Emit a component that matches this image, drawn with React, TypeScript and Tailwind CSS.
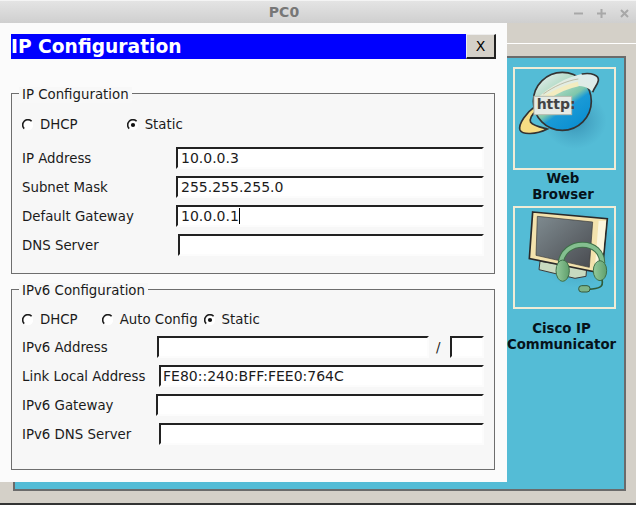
const inputClass =
  "h-[22px] bg-white border-2 border-t-[#222] border-l-[#222] border-r-[#fcfcfc] border-b-[#fcfcfc] text-[14px] leading-[18px] whitespace-nowrap";

function Radio({ checked }: { checked?: boolean }) {
  return (
    <svg width="12" height="12" viewBox="0 0 12 12" className="shrink-0">
      <circle cx="6" cy="6" r="5.2" fill="#fff" />
      <path d="M9.6 2.2 A5 5 0 0 0 2.2 9.6" fill="none" stroke="#1c1c1c" strokeWidth="1.6" />
      {checked && <circle cx="6" cy="6" r="2.1" fill="#111" />}
    </svg>
  );
}

function Row({ label, value, left, caret, tight }: { label: string; value?: string; left: number; caret?: boolean; tight?: boolean }) {
  return (
    <div className="flex h-[29px] items-start">
      <div className="pt-[2px] pl-[10px] text-[13.33px] leading-[20px]" style={{ width: left }}>
        {label}
      </div>
      <div className={`${inputClass} flex-1 ${tight ? "pl-[2px]" : "pl-[3px]"}`}>
        {value}
        {caret && <span className="inline-block h-[16px] w-px bg-black align-[-3px]" />}
      </div>
    </div>
  );
}

function Group({ title, className, children }: { title: string; className: string; children: React.ReactNode }) {
  return (
    <div className={`relative mx-[11px] w-[484px] border border-[#6e6e6e] ${className}`}>
      <div className="absolute left-[7px] top-[-7px] bg-[#f8f8f8] px-[3px] text-[13.33px] leading-[16px]">{title}</div>
      {children}
    </div>
  );
}

// coordinates follow a 3x crop of the tile
function BrowserIcon() {
  return (
    <svg width="99" height="99" viewBox="15 15 297 297">
      <defs>
        <linearGradient id="globe" x1="0.15" y1="0" x2="0.85" y2="1">
          <stop offset="0" stopColor="#e6eeee" />
          <stop offset="0.28" stopColor="#b5dcc8" />
          <stop offset="0.52" stopColor="#7fc7ab" />
          <stop offset="0.62" stopColor="#1a9ad6" />
          <stop offset="1" stopColor="#078cd0" />
        </linearGradient>
        <radialGradient id="iconGlow">
          <stop offset="0" stopColor="#1f6f98" stopOpacity="0.55" />
          <stop offset="1" stopColor="#2f7fa8" stopOpacity="0" />
        </radialGradient>
        <linearGradient id="swoosh" x1="0" y1="1" x2="1" y2="0">
          <stop offset="0" stopColor="#e9ecd2" />
          <stop offset="1" stopColor="#dcecef" />
        </linearGradient>
      </defs>
      <ellipse cx="195" cy="170" rx="95" ry="85" fill="url(#iconGlow)" />
      <path d="M78 125 C50 145 24 180 30 198 C36 213 78 212 112 195 C92 190 70 186 62 175 C58 165 65 150 80 142 Z" fill="#f6dd83" stroke="#333" strokeWidth="5" />
      <circle cx="157" cy="112" r="87" fill="url(#globe)" stroke="#333" strokeWidth="5" />
      <path d="M85 100 C115 72 170 38 215 30 C245 25 268 34 265 50 C262 65 252 70 248 85 C235 65 200 62 170 70 C130 85 100 110 85 118 Z" fill="url(#swoosh)" />
      <path d="M100 90 C130 68 170 50 205 45" fill="none" stroke="#a9a38a" strokeWidth="2" />
      <path d="M215 30 C245 25 268 34 265 50 C262 65 252 70 248 85" fill="none" stroke="#333" strokeWidth="5" />
      <path d="M110 100 C140 82 170 66 205 60" fill="none" stroke="#f3ecc0" strokeWidth="14" />
      <rect x="72" y="97" width="113" height="55" fill="#e6ebe5" stroke="#b5baae" strokeWidth="3" />
      <text x="80" y="136" fontSize="42" fill="#444" fontFamily="'DejaVu Sans', sans-serif">http:</text>
    </svg>
  );
}

function PhoneIcon() {
  return (
    <svg width="99" height="99" viewBox="-15 0 297 297">
      <defs>
        <linearGradient id="screen" x1="0" y1="0" x2="1" y2="1">
          <stop offset="0" stopColor="#7f8b90" />
          <stop offset="1" stopColor="#494b50" />
        </linearGradient>
        <linearGradient id="cup" x1="0" y1="0" x2="1" y2="0">
          <stop offset="0" stopColor="#95cb9c" />
          <stop offset="1" stopColor="#5f9f6c" />
        </linearGradient>
        <radialGradient id="phoneGlow">
          <stop offset="0" stopColor="#1f6f98" stopOpacity="0.6" />
          <stop offset="1" stopColor="#2f7fa8" stopOpacity="0" />
        </radialGradient>
      </defs>
      <ellipse cx="170" cy="120" rx="125" ry="120" fill="url(#phoneGlow)" />
      <path d="M60 160 L57 185 L165 211 L198 205 L200 180 Z" fill="#c8dac0" stroke="#3b3b3b" strokeWidth="3" />
      <path d="M38 12 L262 32 L246 196 L28 152 Z" fill="#f3e2ad" stroke="#2a2a2a" strokeWidth="5" />
      <path d="M52 25 L218 42 L208 178 L48 142 Z" fill="url(#screen)" stroke="#3a3a3a" strokeWidth="2" />
      <path d="M236 38 L258 38 L244 190 L224 186 Z" fill="#fbf5dc" />
      <path d="M122 165 C126 130 155 110 188 110 C222 110 246 132 247 165" fill="none" stroke="#3f7049" strokeWidth="18" />
      <path d="M122 165 C126 130 155 110 188 110 C222 110 246 132 247 165" fill="none" stroke="#84bf8f" strokeWidth="12" />
      <ellipse cx="128" cy="188" rx="20" ry="32" fill="url(#cup)" stroke="#3f7049" strokeWidth="3" />
      <ellipse cx="240" cy="188" rx="20" ry="30" fill="url(#cup)" stroke="#3f7049" strokeWidth="3" />
      <path d="M246 215 C252 238 236 242 205 244" fill="none" stroke="#2f5c3a" strokeWidth="5" />
      <rect x="176" y="233" width="34" height="19" rx="9" fill="#7db488" stroke="#35593c" strokeWidth="3" />
    </svg>
  );
}

function IconTile({ children }: { children: React.ReactNode }) {
  return <div className="h-[103px] w-[103px] shrink-0 border-2 border-[#f1ecd6]">{children}</div>;
}

export default function App() {
  return (
    <div className="relative h-[505px] w-[636px] overflow-hidden bg-[#d4d0c8] font-['DejaVu_Sans',sans-serif] text-[#1b1b1b]">
      {/* title bar */}
      <div className="relative flex h-[23px] items-center justify-center bg-gradient-to-b from-[#e4e4e4] to-[#cfcfcf] border-t border-[#f4f4f4] pr-[68px]">
        <span className="text-[14px] font-bold text-[#777]">PC0</span>
        <div className="absolute right-[7px] top-[8px] flex gap-[14px] text-[#a8a8a8]">
          <svg width="9" height="9" viewBox="0 0 9 9"><path d="M0 4.5h9" stroke="currentColor" strokeWidth="2" /></svg>
          <svg width="9" height="9" viewBox="0 0 9 9"><path d="M0 4.5h9M4.5 0v9" stroke="currentColor" strokeWidth="2" /></svg>
          <svg width="9" height="9" viewBox="0 0 9 9"><path d="M1 1l7 7M8 1l-7 7" stroke="currentColor" strokeWidth="2" /></svg>
        </div>
      </div>

      {/* tab strip line */}
      <div className="mt-[20px] h-px bg-white" />

      {/* desktop panel */}
      <div className="ml-[13px] mt-[12px] flex h-[435px] w-[613px] justify-end border-2 border-[#6b6b6b] bg-[#54bcd6] pr-[8px] pt-[9px]">
        <div className="flex w-[103px] flex-col items-center text-[13.33px] font-bold leading-[16px] text-[#06121a]">
          <IconTile>
            <BrowserIcon />
          </IconTile>
          <div className="mr-[3px] h-[36px] pt-[1px] text-center">
            Web
            <br />
            Browser
          </div>
          <IconTile>
            <PhoneIcon />
          </IconTile>
          <div className="mr-[6px] mt-[12px] whitespace-nowrap text-center">
            Cisco IP
            <br />
            Communicator
          </div>
        </div>
      </div>

      {/* dialog over the desktop */}
      <div className="absolute left-0 top-[23px] h-[459px] w-[507px] bg-[#fbfbfb] pt-[11px]">
        <div className="flex h-[25px]">
          <div className="ml-[11px] w-[455px] bg-[#0000ff] text-[18.67px] font-bold leading-[25px] text-white">IP Configuration</div>
          <div className="h-[25px] w-[30px] border-t border-l border-t-[#eee] border-l-[#eee] border-b-2 border-r-2 border-b-[#222] border-r-[#222] bg-[#d4d0c8] text-center text-[14px] leading-[22px] text-black">
            X
          </div>
        </div>

        <Group title="IP Configuration" className="mt-[34px] h-[181px] bg-[#f7f7f7] pt-[21px]">
          <div className="flex h-[20px] items-center pl-[10px] text-[13.33px]">
            <Radio />
            <span className="ml-[6px]">DHCP</span>
            <span className="ml-[49px]"><Radio checked /></span>
            <span className="ml-[6px]">Static</span>
          </div>
          <div className="mt-[12px] pr-[10px]">
            <Row label="IP Address" value="10.0.0.3" left={164} />
            <Row label="Subnet Mask" value="255.255.255.0" left={164} />
            <Row label="Default Gateway" value="10.0.0.1" left={164} caret />
            <Row label="DNS Server" left={166} />
          </div>
        </Group>

        <Group title="IPv6 Configuration" className="mt-[15px] h-[181px] bg-[#f7f7f7] pt-[20px]">
          <div className="flex h-[20px] items-center pl-[10px] text-[13.33px]">
            <Radio />
            <span className="ml-[6px]">DHCP</span>
            <span className="ml-[24px]"><Radio /></span>
            <span className="ml-[6px]">Auto Config</span>
            <span className="ml-[6px]"><Radio checked /></span>
            <span className="ml-[6px]">Static</span>
          </div>
          <div className="mt-[6px] pr-[10px]">
            <div className="flex h-[29px] items-start">
              <div className="w-[145px] pt-[2px] pl-[10px] text-[13.33px] leading-[20px]">IPv6 Address</div>
              <div className={`${inputClass} w-[272px]`} />
              <div className="w-[21px] pl-[7px] pt-[2px] text-[13.33px] leading-[20px]">/</div>
              <div className={`${inputClass} w-[34px]`} />
            </div>
            <Row label="Link Local Address" value="FE80::240:BFF:FEE0:764C" left={147} tight />
            <Row label="IPv6 Gateway" left={144} />
            <Row label="IPv6 DNS Server" left={147} />
          </div>
        </Group>
      </div>

      {/* bottom edge */}
      <div className="absolute bottom-0 left-0 h-[2px] w-full bg-[#333]" />
    </div>
  );
}
